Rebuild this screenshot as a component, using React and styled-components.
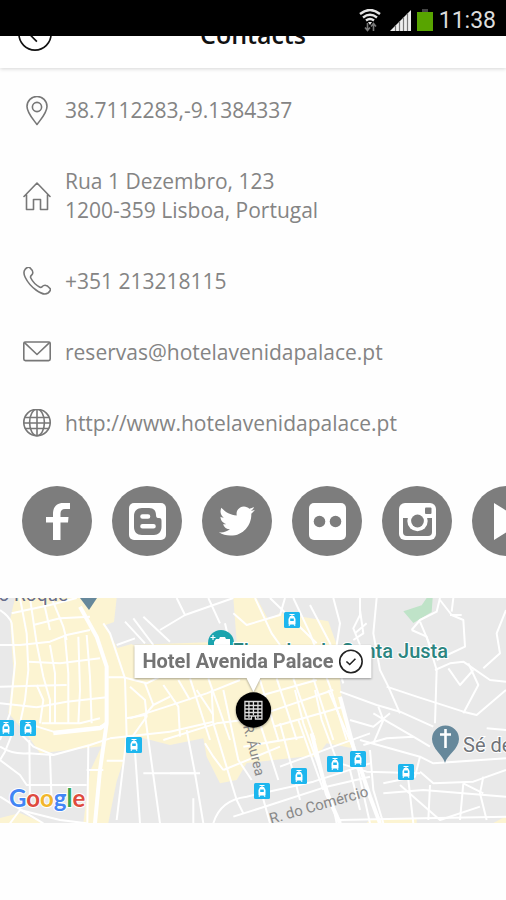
import React from "react";
import styled, { createGlobalStyle } from "styled-components";
import { FaTwitter } from "react-icons/fa";

const GlobalStyle = createGlobalStyle`
  *, *::before, *::after { box-sizing: border-box; }
  body { margin: 0; background: #fefefe; font-family: "Open Sans", "Noto Sans", sans-serif; }
`;

const Screen = styled.div`
  min-height: 100vh;
  overflow-x: hidden;
`;

const StatusBar = styled.div`
  position: relative;
  z-index: 2;
  display: flex;
  align-items: center;
  justify-content: flex-end;
  height: 36px;
  padding: 5px 10px 0 0;
  background: #000;
`;

const StatusIcon = styled.svg`
  display: block;
  width: ${(p) => p.$width}px;
  height: 24px;
  margin-right: ${(p) => p.$gap}px;
`;

const Clock = styled.time`
  color: #dcdcdc;
  font: 400 23px/31px Roboto, sans-serif;
`;

const Header = styled.header`
  display: grid;
  grid-template-columns: 36px 1fr 36px;
  align-items: center;
  height: 68px;
  margin-top: -36px;
  padding: 0 17px;
  background: #fff;
  box-shadow: 0 1px 4px rgba(0, 0, 0, 0.16);
`;

const BackButton = styled.button`
  display: block;
  width: 36px;
  height: 36px;
  padding: 0;
  border: 0;
  background: none;
  color: #111;
`;

const Title = styled.h1`
  margin: 0;
  text-align: center;
  color: #111;
  font-size: 25px;
  font-weight: 600;
  line-height: 32px;
`;

const ContactList = styled.ul`
  display: flex;
  flex-direction: column;
  gap: 42px;
  margin: 0;
  padding: 28px 23px 0;
  list-style: none;
`;

const ContactRow = styled.li`
  display: flex;
  align-items: center;
  gap: 14px;
  color: #848484;
  font-size: 21px;
  line-height: 29px;
`;

const LineIcon = styled.svg`
  flex: none;
  width: 28px;
  height: 30px;
  margin: -1px 0;
  fill: none;
  stroke: #777;
  stroke-width: 1.6;
  stroke-linejoin: round;
  stroke-linecap: round;
`;

const ContactLink = styled.a`
  color: inherit;
  text-decoration: none;
`;

const Address = styled.address`
  font-style: normal;
`;

const SocialBar = styled.nav`
  display: flex;
  gap: 20px;
  padding: 48px 0 42px 22px;
  overflow: hidden;
`;

const SocialLink = styled.a`
  flex: none;
  display: grid;
  place-items: center;
  width: 70px;
  height: 70px;
  border-radius: 50%;
  background: #7d7d7d;
  color: #fff;
`;

const MapPanel = styled.section`
  position: relative;
  height: 225px;
  overflow: hidden;
  background: #ebebeb;
`;

const MapDrawing = styled.svg`
  display: block;
  width: 100%;
  height: 100%;
`;

const PlaceMarker = styled.div`
  position: absolute;
  top: 47px;
  left: 50%;
  transform: translateX(-50%);
  display: flex;
  flex-direction: column;
  align-items: center;
  filter: drop-shadow(0 1px 1px rgba(0, 0, 0, 0.35));
`;

const Callout = styled.button`
  display: flex;
  align-items: center;
  gap: 5px;
  height: 33px;
  padding: 0 8px;
  border: 0;
  background: #fff;
  color: #747474;
  font: 700 20px/33px Roboto, sans-serif;
  white-space: nowrap;
`;

const Glyph = styled.svg`
  display: block;
  flex: none;
`;

const contacts = [
  {
    id: "position",
    icon: (
      <>
        <path d="M14 28.500 C10 23 4 17 4 10.500 A10 10 0 0 1 24 10.500 C24 17 18 23 14 28.500Z" />
        <circle cx="14" cy="11" r="4.600" />
      </>
    ),
    body: <ContactLink href="geo:38.7112283,-9.1384337">38.7112283,-9.1384337</ContactLink>,
  },
  {
    id: "address",
    icon: <path d="M1 15.500 L14 2 L27 15.500 M3.500 14V28.500H10.500V18.500H17.500V28.500H24.500V14" />,
    body: (
      <Address>
        Rua 1 Dezembro, 123
        <br />
        1200-359 Lisboa, Portugal
      </Address>
    ),
  },
  {
    id: "phone",
    icon: (
      <path d="M2 2.500 C3.500 .5 5.500 -.3 6.800 .7 C8.800 2.500 10.600 5.200 9.300 7.200 C8.300 8.800 6.800 9 7.800 11 C9.800 15 13 18 16.500 20 C18.600 21.200 18.800 19.500 20.500 18.600 C22.500 17.600 25.500 19.600 27 21.400 C28 22.800 26.800 24.600 25 26 C22 28.200 17 26 13 23 C8.500 19.700 4.500 15 2.300 10.500 C.7 7.200 .4 4.500 2 2.500Z" />
    ),
    body: <ContactLink href="tel:+351213218115">+351 213218115</ContactLink>,
  },
  {
    id: "email",
    icon: (
      <>
        <rect x="0.800" y="4" width="26.400" height="18.600" rx="1.600" />
        <path d="M1.500 4.700 L14 16.500 L26.500 4.700" />
      </>
    ),
    body: <ContactLink href="mailto:reservas@hotelavenidapalace.pt">reservas@hotelavenidapalace.pt</ContactLink>,
  },
  {
    id: "website",
    icon: (
      <>
        <circle cx="14" cy="13.500" r="13.200" />
        <ellipse cx="14" cy="13.500" rx="7.400" ry="13.200" />
        <path d="M14 .5V26.500M2.500 8.500H25.500M1 14H27M2.500 19.500H25.500" />
      </>
    ),
    body: <ContactLink href="http://www.hotelavenidapalace.pt">http://www.hotelavenidapalace.pt</ContactLink>,
  },
];

const socials = [
  {
    name: "Facebook",
    icon: (
      <path
        fill="currentColor"
        d="M15 38V20.500H8V15H15V12C15 4.500 19 1 25 1H32V7H27C24 7 22.500 8.500 22.500 11.500V15H30.500L30 20.500H22.500V38Z"
      />
    ),
  },
  {
    name: "Blogger",
    icon: (
      <>
        <rect x="1" y="1" width="37" height="37" rx="5" fill="currentColor" />
        <path
          fill="#7d7d7d"
          d="M14 6H21C26 6 28 9 28 13C28 15.500 29 16 31 16C33 16 33.500 17 33.500 19V25C33.500 30 30 33 26 33H14C9 33 6 30 6 25V14C6 9 9 6 14 6Z"
        />
        <path stroke="currentColor" strokeWidth="4.600" strokeLinecap="round" d="M14.500 14.500H20M14.500 24.200H25.500" />
      </>
    ),
  },
  { name: "Twitter", twitter: true },
  {
    name: "Flickr",
    icon: (
      <>
        <rect x="1" y="1" width="37" height="37" rx="5" fill="currentColor" />
        <circle cx="11.500" cy="19.500" r="5.800" fill="#7d7d7d" />
        <circle cx="27.500" cy="19.500" r="5.800" fill="#7d7d7d" />
      </>
    ),
  },
  {
    name: "Instagram",
    icon: (
      <>
        <rect x="1" y="1" width="37" height="37" rx="6" fill="currentColor" />
        <path fill="#7d7d7d" d="M5 16H34V30Q34 34 30 34H9Q5 34 5 30Z" />
        <circle cx="19.500" cy="19" r="10.200" fill="currentColor" />
        <circle cx="19.500" cy="19" r="6.400" fill="#7d7d7d" />
        <rect x="27" y="5.500" width="6.500" height="6.500" rx="1" fill="#7d7d7d" />
      </>
    ),
  },
  { name: "YouTube", icon: <path fill="currentColor" d="M6 1L36 19.500L6 38Z" /> },
];

const stops = [
  [292, 22], [6, 130], [28, 130], [134, 147], [262, 193],
  [299, 178], [335, 166], [358, 161], [406, 174],
];

const westRoads = [
  "M0 60Q30 80 35 100L45 220L30 370L0 450",
  "M60 24L80 130L85 240L75 330L60 400",
  "M90 24L110 160L130 260L150 330L150 400",
  "M35 70L150 45L230 24",
  "M100 105L180 85L270 80",
  "M0 165H60L150 155L200 135L270 120",
  "M85 215L180 220L300 205",
  "M0 290L110 287L200 285",
  "M0 340L110 352L200 335L320 322",
  "M150 165L165 250L165 400",
  "M195 140L205 250L205 400",
  "M235 140L240 300L235 400",
  "M260 135L270 260L275 400",
  "M110 285L130 330L120 400",
  "M80 400L160 425L300 410L320 400",
  "M125 400L240 400L300 385",
  "M60 430L100 470L160 495L270 465L330 445",
  "M0 470Q40 495 85 490L160 495",
  "M35 435L15 485L0 510",
  "M88 450L90 640M150 495L155 640M265 465L262 700",
  "M0 510L60 555L80 585L260 585M0 620L80 670L130 700",
  "M30 700L60 660L180 690L260 700M260 540H310",
  "M155 24L190 110L200 150M130 30L150 120",
  "M310 100L330 130L350 190L375 265L380 440L350 690",
  "M325 262H370L440 280L510 245M435 280L460 345L510 320",
  "M380 385L435 375L460 345M435 375L455 520L480 700",
  "M405 485L420 700M430 550H600M330 445L510 425M320 512H370",
  "M350 165L405 145M375 95L435 160M400 85L460 165M430 80L510 155",
];

const centralRoads = [
  "M140 24L165 75L90 120M165 75L310 24M235 24L270 100M310 70L350 105L450 75L465 24",
  "M285 100L300 165M375 24L425 130L450 165M420 24L560 160",
  "M490 24L540 130L600 290L650 450M540 45L600 160L640 280",
  "M610 24L630 100L620 165M690 24L690 75L670 115L690 165",
  "M180 265L240 450M235 265L265 350L300 450",
  "M0 385L110 350L230 310L330 270M100 450L260 400L340 390",
  "M100 285L145 350L150 440M145 270L180 330",
  "M390 270L445 450M440 265L500 450M490 265L555 450M550 265L610 450",
  "M420 365L610 300M430 410L640 350M380 320L560 270",
  "M0 450L50 380L45 330L0 290",
];

const southRoads = [
  "M125 0L130 100L200 330L220 370",
  "M0 125L130 95M50 120L75 250L100 400M0 250H75",
  "M80 0L130 75M160 0L205 210L245 270",
  "M160 240L245 205L330 170M160 240L130 200L105 160",
  "M130 400Q150 330 230 320L430 275L600 220",
  "M190 380L300 345L470 290L600 260",
  "M270 100L325 270M330 100L365 230L390 330M385 90L460 300",
  "M375 0L400 100L490 350L500 400M435 0L455 90L500 210",
  "M475 0L550 175L600 400M220 170L400 140M330 230L490 170L600 130",
  "M70 325V400M275 310L300 400M540 240L570 360",
];

const eastRoads = [
  "M110 24L100 130L120 240L145 290L180 370",
  "M60 60L70 130L40 150M45 130L80 100",
  "M215 120L240 90L290 65L300 24M215 120L260 140L290 240L285 400",
  "M300 30L335 75L370 90L375 170L290 210M330 75H365M340 24L335 65",
  "M240 95L280 190M285 240L330 220L370 215L450 270L498 275",
  "M325 235L360 285L400 240M385 220L415 285L370 370",
  "M498 60L470 130L480 190L430 235",
  "M140 290L230 320L370 365L410 375L498 300",
  "M0 305L110 345L180 365L280 410",
  "M30 390L100 410L150 370M115 350L130 390L100 460",
  "M100 370L220 440L270 470M70 465L140 445L220 440",
  "M60 450L240 500L225 560L130 580M240 500L280 520L498 505",
  "M240 545L280 580L400 575L498 540M130 610L250 600L498 620",
  "M205 570L220 700M270 585L265 690M370 580L360 690M430 560L420 610L440 690",
  "M90 480L100 600L130 700M0 520L80 545L240 550",
  "M180 585L300 690L420 650M370 580L430 610",
  "M0 690L250 685L498 680M440 415L498 420",
];

const arterials = [
  ["0 -24", "M240 50L290 140L320 230L320 400L300 540L285 700"],
  ["0 -24", "M160 430L300 415L320 400"],
  ["1020 -24", "M0 320L40 470L90 620L120 700"],
  ["510 276", "M425 130L470 310L510 400"],
];

function Roads({ shift, paths }) {
  return (
    <g transform={`translate(${shift})`}>
      {paths.map((d) => (
        <path key={d} d={d} />
      ))}
    </g>
  );
}

function CityMap() {
  return (
    <MapDrawing viewBox="0 0 506 225" preserveAspectRatio="xMidYMid slice" role="img" aria-label="Map of Lisbon">
      <rect width="506" height="225" fill="#e9e9e9" />
      <g transform="scale(.33333)">
        <g fill="#fcf4d2">
          <path d="M45 0H350L342 72L315 82L352 150L395 138L510 235V405L390 420L370 490L350 550L325 675H250L270 520L305 445L120 466L85 415L25 345L40 215L30 66Z" />
          <path d="M390 141L710 130L700 0H770L805 65L840 45L985 70L1010 140L1025 300L1055 450L980 436L950 476H910L740 495L710 546L660 556L620 476L610 421L510 441L390 410Z" />
          <path d="M0 660L60 645L130 675H0ZM1110 665L1250 662V675H1100ZM1480 675L1518 655V675Z" />
        </g>
        <path d="M1210 40L1265 22L1280 0H1298L1295 42L1240 75Z" fill="#bfe3c8" />
        <path d="M1205 55L1240 40L1285 30" fill="none" stroke="#e9e9e9" strokeWidth="0" />
        <g fill="none" stroke="#fff" strokeWidth="6" strokeLinejoin="round">
          <Roads shift="0 -24" paths={westRoads} />
          <Roads shift="390 -24" paths={centralRoads} />
          <Roads shift="510 276" paths={southRoads} />
          <Roads shift="1020 -24" paths={eastRoads} />
        </g>
        <g fill="none" stroke="#fff" strokeWidth="12" strokeLinejoin="round">
          {arterials.map(([shift, d]) => (
            <path key={d} d={d} transform={`translate(${shift})`} />
          ))}
        </g>
      </g>

      {stops.map(([x, y]) => (
        <g key={`${x}-${y}`} transform={`translate(${x} ${y})`}>
          <rect x="-8" y="-8" width="16" height="16" rx="1.500" fill="#1db6ee" />
          <path d="M-2.500 -5.500H2.500M0 -5.500V-3" stroke="#fff" strokeWidth="1.200" />
          <path d="M-2 -4H2L3.500 -1V4.500H-3.500V-1Z" fill="#fff" />
          <path d="M-1.800 -1.500H1.800V1H-1.800Z" fill="#1db6ee" />
          <path d="M-3 6L-2 4M3 6L2 4" stroke="#fff" />
        </g>
      ))}

      <g fontFamily="Roboto, sans-serif">
        <text x="68" y="3" textAnchor="end" fontSize="19" fill="#666d8c">São Roque</text>
        <path d="M80 0H97L89 12Z" fill="#66889b" />
        <circle cx="221" cy="45" r="13" fill="#1ba4ae" />
        <path d="M216 41H219L220 39H225L226 41H230V50H214V44Z" fill="#fff" />
        <path d="M213 37V42M210.500 39.500H215.500" stroke="#fff" strokeWidth="1.200" />
        <text x="448" y="60" textAnchor="end" fontSize="20" fontWeight="500" fill="#2b8580" stroke="#fff" strokeWidth="2" paintOrder="stroke">
          Elevador de Santa Justa
        </text>
        <path d="M445 165C443 157 432 151 432 141A13.500 13.500 0 0 1 459 141C459 151 447 157 445 165Z" fill="#66889b" />
        <path d="M445.500 131V150M440 136.500H451" stroke="#fff" strokeWidth="2.600" />
        <text x="463" y="154" fontSize="20" fill="#6f747a" stroke="#fff" strokeWidth="2" paintOrder="stroke">Sé de Lisboa</text>
        <text transform="translate(243 128) rotate(76)" fontSize="14" fill="#888">R. Áurea</text>
        <text transform="translate(271 226) rotate(-16)" fontSize="15" fill="#888">R. do Comércio</text>
      </g>

      <text x="9" y="209" fontFamily="Lato, sans-serif" fontSize="24" fontWeight="700" stroke="#fff" strokeWidth="2" paintOrder="stroke">
        <tspan fill="#4285f4">G</tspan>
        <tspan fill="#de4b3e">o</tspan>
        <tspan fill="#f2b62b">o</tspan>
        <tspan fill="#4285f4">g</tspan>
        <tspan fill="#34a853">l</tspan>
        <tspan fill="#de4b3e">e</tspan>
      </text>
    </MapDrawing>
  );
}

function HotelMarker() {
  return (
    <PlaceMarker>
      <Callout type="button">
        Hotel Avenida Palace
        <Glyph width="25" height="25" viewBox="0 0 25 25" fill="none" stroke="#222" strokeWidth="1.600" aria-hidden="true">
          <circle cx="12.500" cy="12.500" r="11.200" />
          <path d="M8 12.500L11.300 15.500L17 9.800" />
        </Glyph>
      </Callout>
      <Glyph width="14" height="14" viewBox="0 0 14 14" aria-hidden="true">
        <path d="M0 0H14L7 14Z" fill="#fff" />
      </Glyph>
      <Glyph width="36" height="36" viewBox="0 0 36 36" aria-hidden="true">
        <circle cx="18" cy="18" r="17.700" fill="#000" />
        <path
          d="M9.500 9.500H26.500V27H20V24H16V27H9.500ZM13.500 10V26M18 10V23M22.500 10V26M10 13.500H26M10 17H26M10 20.500H26M10 23.800H26"
          fill="none"
          stroke="#ddd"
          strokeWidth="1.300"
        />
      </Glyph>
    </PlaceMarker>
  );
}

export default function App() {
  return (
    <>
      <GlobalStyle />
      <Screen>
        <StatusBar>
          <StatusIcon $width={24} $gap={8} viewBox="0 0 24 24" fill="none" stroke="#e4e4e4" strokeWidth="2.400" aria-hidden="true">
            <path d="M2 5Q12 -3 22 5M5 8.500Q12 3 19 8.500M8 11.500Q12 8.500 16 11.500" />
            <path d="M10 13H14L12 16Z" fill="#e4e4e4" stroke="none" />
            <path d="M9.500 14V21M7 18.500L9.500 21.500L12 18.500M15.500 22V15M13 17.500L15.500 14.500L18 17.500" stroke="#777" strokeWidth="1.600" />
          </StatusIcon>
          <StatusIcon $width={22} $gap={4} viewBox="0 0 22 24" aria-hidden="true">
            <path d="M0 22L21 1V22Z" fill="#eee" />
            <path d="M5.500 16V22M9.500 12V22M13.500 8V22M17.500 4V22" stroke="#777" strokeWidth="1.200" />
          </StatusIcon>
          <StatusIcon $width={18} $gap={5} viewBox="0 0 18 24" aria-hidden="true">
            <path d="M6 0H12V3H6Z" fill="#444" />
            <path d="M1 3H17V22H1Z" fill="#58a400" />
          </StatusIcon>
          <Clock>11:38</Clock>
        </StatusBar>

        <Header>
          <BackButton type="button" aria-label="Back">
            <Glyph width="36" height="34" viewBox="0 0 36 36" fill="none" stroke="currentColor" strokeWidth="1.800" aria-hidden="true">
              <circle cx="18" cy="18" r="17" />
              <path d="M20 10L12 18L20 26" />
            </Glyph>
          </BackButton>
          <Title>Contacts</Title>
        </Header>

        <main>
          <ContactList>
            {contacts.map((c) => (
              <ContactRow key={c.id}>
                <LineIcon viewBox="0 0 28 30" aria-hidden="true">{c.icon}</LineIcon>
                {c.body}
              </ContactRow>
            ))}
          </ContactList>

          <SocialBar aria-label="Social networks">
            {socials.map((s) => (
              <SocialLink key={s.name} href={`#${s.name.toLowerCase()}`} aria-label={s.name}>
                {s.twitter ? (
                  <FaTwitter size={36} />
                ) : (
                  <Glyph width="39" height="39" viewBox="0 0 39 39" fill="none" aria-hidden="true">{s.icon}</Glyph>
                )}
              </SocialLink>
            ))}
          </SocialBar>

          <MapPanel>
            <CityMap />
            <HotelMarker />
          </MapPanel>
        </main>
      </Screen>
    </>
  );
}
